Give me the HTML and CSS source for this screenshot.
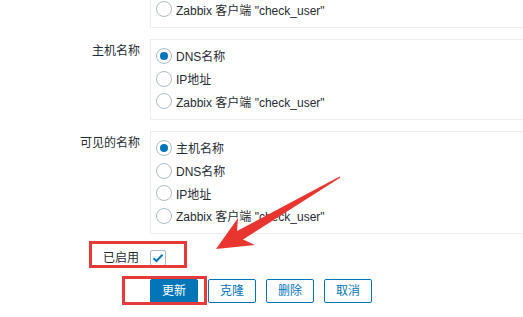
FILE: index.html
```html
<!DOCTYPE html>
<html lang="zh">
<head>
<meta charset="utf-8">
<title>发现规则</title>
<link rel="stylesheet" href="styles.css">
</head>
<body>
<div class="page">
  <form class="form">
    <div class="row">
      <div class="label"></div>
      <ul class="box">
        <li class="opt"><span class="radio"></span><span>Zabbix 客户端 "check_user"</span></li>
      </ul>
    </div>
    <div class="row">
      <div class="label">主机名称</div>
      <ul class="box">
        <li class="opt"><span class="radio checked"></span><span>DNS名称</span></li>
        <li class="opt"><span class="radio"></span><span>IP地址</span></li>
        <li class="opt"><span class="radio"></span><span>Zabbix 客户端 "check_user"</span></li>
      </ul>
    </div>
    <div class="row">
      <div class="label">可见的名称</div>
      <ul class="box">
        <li class="opt"><span class="radio checked"></span><span>主机名称</span></li>
        <li class="opt"><span class="radio"></span><span>DNS名称</span></li>
        <li class="opt"><span class="radio"></span><span>IP地址</span></li>
        <li class="opt"><span class="radio"></span><span>Zabbix 客户端 "check_user"</span></li>
      </ul>
    </div>
    <div class="row row-check">
      <div class="label label-check">已启用</div>
      <div class="check-cell">
        <span class="checkbox">
          <svg width="12" height="10" viewBox="0 0 12 10"><path d="M1.5 5.2 L4.5 8 L10.5 1.8" fill="none" stroke="#0275b8" stroke-width="2"/></svg>
        </span>
      </div>
    </div>
    <div class="row row-buttons">
      <div></div>
      <div class="buttons">
        <button type="button" class="btn primary">更新</button>
        <button type="button" class="btn">克隆</button>
        <button type="button" class="btn">删除</button>
        <button type="button" class="btn">取消</button>
      </div>
    </div>
  </form>

  <div class="mark mark-enabled"></div>
  <div class="mark mark-update"></div>
  <svg class="arrow" width="523" height="317" viewBox="0 0 523 317">
    <polygon fill="#e8352f" points="216,249 255,245 243,239.5 340.4,177.6 339.6,176.4 237,231 238,218"/>
  </svg>
</div>
</body>
</html>
```

FILE: styles.css
```css
* { box-sizing: border-box; }
html, body {
  margin: 0;
  padding: 0;
  background: #ffffff;
}
body {
  width: 523px;
  height: 317px;
  overflow: hidden;
  font-family: "Liberation Sans", Arial, "Noto Sans CJK SC", sans-serif;
  font-size: 12px;
  color: #1f2c33;
}
.page {
  position: relative;
  width: 523px;
  height: 317px;
  overflow: hidden;
}
.form {
  margin: -8px 0 0 0;
  width: 700px;
  display: flex;
  flex-direction: column;
  row-gap: 11px;
}
.row {
  display: grid;
  grid-template-columns: 140px 1fr;
  column-gap: 10px;
}
.label {
  text-align: right;
  padding-top: 5px;
  line-height: 14px;
  white-space: nowrap;
}
.box {
  list-style: none;
  margin: 0;
  padding: 5px 5px 6px 5px;
  border: 1px solid #ebeef0;
  width: 520px;
}
.opt {
  height: 22.67px;
  display: flex;
  align-items: center;
  gap: 4px;
  white-space: nowrap;
}
.radio {
  width: 16px;
  height: 16px;
  border: 1px solid #acbbc2;
  border-radius: 50%;
  background: #fff;
  flex: none;
  display: flex;
  align-items: center;
  justify-content: center;
}
.radio.checked::after {
  content: "";
  width: 8px;
  height: 8px;
  border-radius: 50%;
  background: #0275b8;
}
.row-check {
  margin-top: 1px;
  align-items: center;
  height: 24px;
}
.label-check {
  padding-top: 0;
  padding-right: 1px;
}
.check-cell {
  display: flex;
  align-items: center;
}
.checkbox {
  width: 16px;
  height: 16px;
  border: 1px solid #acbbc2;
  border-radius: 2px;
  background: #fff;
  display: flex;
  align-items: center;
  justify-content: center;
}
.row-buttons {
  margin-top: -2px;
}
.buttons {
  display: flex;
  gap: 10px;
}
.btn {
  width: 48px;
  height: 24px;
  padding: 0;
  border: 1px solid #0275b8;
  border-radius: 2px;
  background: #fff;
  color: #0275b8;
  font-family: "Liberation Sans", Arial, "Noto Sans CJK SC", sans-serif;
  font-size: 12px;
  line-height: 22px;
}
.btn.primary {
  background: #0275b8;
  color: #fff;
}
.mark {
  position: absolute;
  border: 3px solid #e5393b;
}
.mark-enabled {
  left: 89px;
  top: 241px;
  width: 98px;
  height: 27px;
}
.mark-update {
  left: 122px;
  top: 276px;
  width: 85px;
  height: 29px;
}
.arrow {
  position: absolute;
  left: 0;
  top: 0;
  pointer-events: none;
}
```
